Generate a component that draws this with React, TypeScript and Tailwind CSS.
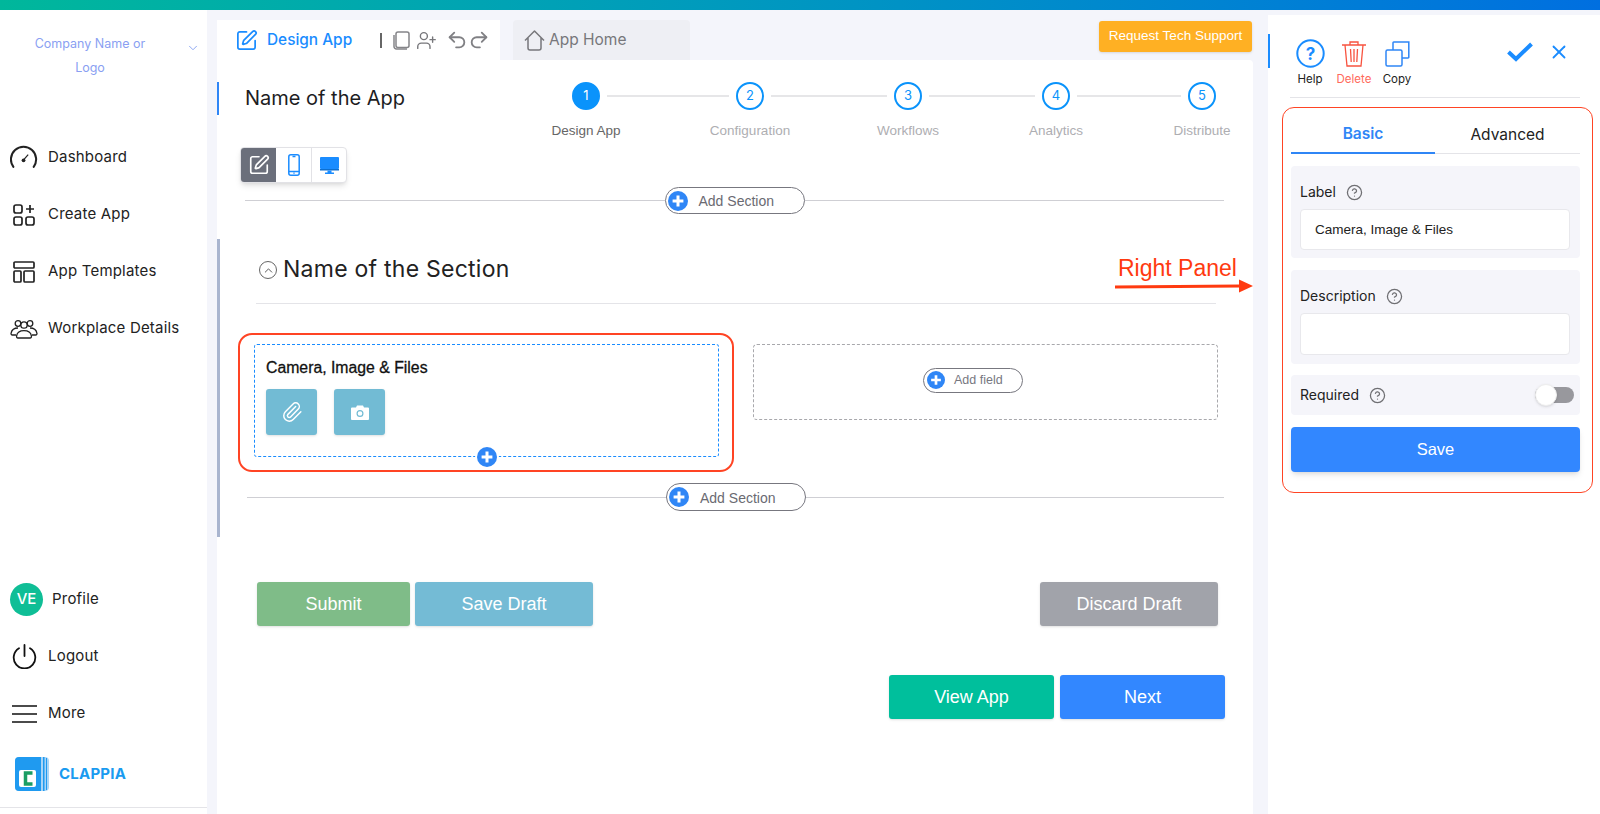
import React from "react";
import { Undo2, Redo2, UserPlus, SquarePen, CircleHelp, X, Paperclip, ChevronDown, ChevronUp } from "lucide-react";

const inter = "font-['Inter',sans-serif]";
const arial = "font-['Liberation_Sans',Arial,sans-serif]";

function PlusDot({ size }: { size: number }) {
  return (
    <svg width={size} height={size} viewBox="0 0 20 20" className="shrink-0">
      <circle cx="10" cy="10" r="10" fill="#2f86f6" />
      <path d="M10 4.6v10.8M4.6 10h10.8" stroke="#fff" strokeWidth="3" />
    </svg>
  );
}

function AddSection({ leftClass }: { leftClass: string }) {
  return (
    <div className="flex items-center">
      <div className={`${leftClass} h-px bg-[#cfcfd4]`} />
      <div className="flex h-full w-[140px] shrink-0 items-center rounded-full border border-[#77777f] pl-[2px]">
        <PlusDot size={20} />
        <span className={`${arial} ml-[11px] mt-[2px] text-[14px] text-[#6a6a72]`}>Add Section</span>
      </div>
      <div className="h-px flex-1 bg-[#cfcfd4]" />
    </div>
  );
}

function NavItem({ icon, label }: { icon: React.ReactNode; label: string }) {
  return (
    <div className="flex h-[57px] items-center pl-[10px]">
      <div className="flex w-[28px] justify-center">{icon}</div>
      <span className={`${inter} ml-[10px] text-[15px] tracking-[0.2px] text-[#222]`}>{label}</span>
    </div>
  );
}

function Step({ n, label, active }: { n: number; label: string; active?: boolean }) {
  return (
    <div className="flex w-[28px] shrink-0 flex-col items-center">
      <div
        className={`${inter} flex h-[28px] w-[28px] items-center justify-center rounded-full border-2 border-[#0a93fb] text-[13px] ${
          active ? "bg-[#0a93fb] text-white" : "bg-white text-[#0a93fb]"
        }`}
      >
        {n}
      </div>
      <span
        className={`${arial} mt-[11px] whitespace-nowrap text-[13.5px] ${active ? "text-[#666]" : "text-[#aeaeb2]"}`}
      >
        {label}
      </span>
    </div>
  );
}

function StepLine({ w }: { w: string }) {
  return <div className={`${w} mx-[7px] mt-[13px] h-[2px] shrink-0 bg-[#e6e6e8]`} />;
}

function Help({ className }: { className?: string }) {
  return <CircleHelp size={17} strokeWidth={1.8} className={`shrink-0 text-[#6f6f73] ${className ?? ""}`} />;
}

function Card({ children, className }: { children: React.ReactNode; className: string }) {
  return <div className={`rounded-[4px] bg-[#f5f5fa] ${className}`}>{children}</div>;
}

export default function App() {
  return (
    <div className="flex h-[814px] w-[1600px] flex-col overflow-hidden bg-[#f4f5fb]">
      <div className="h-[10px] shrink-0 bg-gradient-to-r from-[#00b79b] to-[#006fe0]" />
      <div className="relative flex min-h-0 flex-1">
        {/* Sidebar */}
        <aside className="flex w-[207px] shrink-0 flex-col bg-white">
          <div className="flex h-[119px] shrink-0 items-start pt-[22px]">
            <div className={`${inter} w-[180px] text-center text-[12.5px] leading-[24px] text-[#8a9ff2]`}>
              Company Name or
              <br />
              Logo
            </div>
            <ChevronDown size={14} strokeWidth={1.5} className="ml-[6px] mt-[9px] text-[#7f9cf0]" />
          </div>
          <NavItem
            label="Dashboard"
            icon={
              <svg width="30" height="24" viewBox="0 0 30 24" fill="none" stroke="#222" strokeWidth="2.200" className="-mt-[2px]">
                <path d="M4.100 22.500 A13.500 13.500 0 1 1 25.900 22.500" strokeLinecap="round" transform="translate(-0.5 0)" />
                <path d="M15 14.500 L19.500 9.500" strokeWidth="1.300" />
                <circle cx="14.500" cy="15.500" r="2" fill="#222" stroke="none" />
              </svg>
            }
          />
          <NavItem
            label="Create App"
            icon={
              <svg width="22" height="22" viewBox="0 0 22 22" fill="none" stroke="#222" strokeWidth="1.700">
                <rect x="1" y="1" width="8" height="8" rx="2" />
                <rect x="1" y="13" width="8" height="8" rx="2" />
                <rect x="13" y="13" width="8" height="8" rx="2" />
                <path d="M17 1v8M13 5h8" />
              </svg>
            }
          />
          <NavItem
            label="App Templates"
            icon={
              <svg width="22" height="22" viewBox="0 0 22 22" fill="none" stroke="#222" strokeWidth="1.700">
                <rect x="1" y="1" width="20" height="6" rx="1" />
                <rect x="1" y="10" width="7" height="11" rx="1" />
                <rect x="11" y="10" width="10" height="11" rx="1" />
              </svg>
            }
          />
          <NavItem
            label="Workplace Details"
            icon={
              <svg width="28" height="20" viewBox="0 0 28 20" fill="none" stroke="#222" strokeWidth="1.300">
                <circle cx="8" cy="4.500" r="2.800" />
                <circle cx="20" cy="4.500" r="2.800" />
                <circle cx="14" cy="6" r="3.200" />
                <path d="M8 19h12c1.200 0 1.600-1 1.400-2.200-.5-3-2.800-5.200-7.400-5.200s-6.900 2.200-7.400 5.200C6.400 18 6.800 19 8 19Z" />
                <path d="M6 16H2.400C1.300 16 .8 15.200 1.100 14c.6-2.700 2.700-5 6.900-5M22 16h3.600c1.100 0 1.600-.8 1.300-2-.6-2.700-2.700-5-6.900-5" />
              </svg>
            }
          />
          <div className="mt-auto">
            <div className="flex h-[57px] items-center pl-[10px]">
              <div className={`${inter} flex h-[33px] w-[33px] items-center justify-center rounded-full bg-[#0fbe96] text-[15px] font-medium text-white`}>
                VE
              </div>
              <span className={`${inter} ml-[9px] text-[15px] tracking-[0.2px] text-[#222]`}>Profile</span>
            </div>
            <NavItem
              label="Logout"
              icon={
                <svg width="25" height="25" viewBox="0 0 25 25" fill="none" stroke="#111" strokeWidth="1.800" strokeLinecap="round">
                  <path d="M12.500 1v11" />
                  <path d="M7 4.300a10.800 10.800 0 1 0 11 0" />
                </svg>
              }
            />
            <NavItem
              label="More"
              icon={
                <svg width="25" height="18" viewBox="0 0 25 18" stroke="#111" strokeWidth="1.600">
                  <path d="M0 1h25M0 9h25M0 17h25" />
                </svg>
              }
            />
            <div className="flex h-[65px] items-start pl-[15px] pt-[15px]">
              <svg width="34" height="34" viewBox="0 0 34 34">
                <rect width="34" height="34" rx="4" fill="#a9d5f7" />
                <path d="M4 0h22v34H4a4 4 0 0 1-4-4V4a4 4 0 0 1 4-4Z" fill="#1f9af0" />
                <path d="M28 0h1.500v34H28zM31 1h1v32h-1z" fill="#1f9af0" />
                <rect x="4" y="13" width="17" height="17" rx="2" fill="#fff" />
                <path d="M17.500 16H10.500v11h7" fill="none" stroke="#1a9d63" strokeWidth="3.500" />
              </svg>
              <span className={`${inter} ml-[10px] mt-[7px] text-[15px] font-bold leading-[20px] tracking-[0.2px] text-[#1a9bf0]`}>CLAPPIA</span>
            </div>
            <div className="h-px bg-[#e4e4e8]" />
            <div className="h-[6px]" />
          </div>
        </aside>

        {/* Main column */}
        <main className="ml-[10px] flex w-[1036px] shrink-0 flex-col">
          <div className="mt-[10px] flex h-[40px] shrink-0 items-start">
            <div className="flex h-[40px] w-[283px] shrink-0 items-center bg-white pl-[18px]">
              <SquarePen size={23} strokeWidth={1.800} className="shrink-0 text-[#1a8cff]" />
              <span className={`${inter} ml-[9px] w-[85px] shrink-0 whitespace-nowrap text-[15.4px] font-medium text-[#1a8cff]`}>Design App</span>
              <div className="ml-[28px] h-[15px] w-[2px] shrink-0 bg-[#666]" />
              <svg width="17" height="19" viewBox="0 0 17 19" fill="none" stroke="#858589" strokeWidth="1.500" className="ml-[11px] shrink-0">
                <rect x="3" y="1" width="13" height="15.500" rx="2" />
                <path d="M1 4v11.500A2.500 2.500 0 0 0 3.500 18H14" />
              </svg>
              <UserPlus size={21} strokeWidth={1.600} className="ml-[6px] shrink-0 text-[#77777b]" />
              <Undo2 size={22} strokeWidth={2} className="ml-[9px] shrink-0 text-[#808084]" />
              <Redo2 size={22} strokeWidth={2} className="shrink-0 text-[#808084]" />
            </div>
            <div className="ml-[13px] flex h-[40px] w-[177px] shrink-0 items-center rounded-t-[4px] bg-[#eeeff4] pl-[11px]">
              <svg width="21" height="21" viewBox="0 0 21 21" fill="none" stroke="#77777b" strokeWidth="1.500" strokeLinejoin="round">
                <path d="M1 10.500 10.500 1 20 10.500M4 8v10a2 2 0 0 0 2 2h9a2 2 0 0 0 2-2V8" />
              </svg>
              <span className={`${inter} ml-[4px] text-[15.5px] text-[#77777b]`}>App Home</span>
            </div>
            <button className={`${arial} ml-auto mr-px mt-px flex h-[31px] w-[153px] items-center justify-center rounded-[3px] bg-[#ffb023] text-[13.5px] text-white shadow-sm`}>
              Request Tech Support
            </button>
          </div>

          <div className="relative min-h-0 flex-1 rounded-tr-[4px] bg-white">
            {/* Header */}
            <div className="flex h-[87px] items-start pl-[28px] pt-[22px]">
              <div className={`${inter} w-[327px] shrink-0 pt-[2px] text-[20px] leading-[28px] text-[#1d1d1f]`}>Name of the App</div>
              <div className="flex items-start">
                <Step n={1} label="Design App" active />
                <StepLine w="w-[122px]" />
                <Step n={2} label="Configuration" />
                <StepLine w="w-[116px]" />
                <Step n={3} label="Workflows" />
                <StepLine w="w-[106px]" />
                <Step n={4} label="Analytics" />
                <StepLine w="w-[104px]" />
                <Step n={5} label="Distribute" />
              </div>
            </div>

            {/* View toggle */}
            <div className="ml-[23px] flex h-[36px] w-[107px] overflow-hidden rounded-[4px] border border-[#e2e2e6] bg-white shadow-md">
              <div className="flex w-[35px] items-center justify-center bg-[#6b6f7b]">
                <SquarePen size={22} strokeWidth={1.800} className="text-white" />
              </div>
              <div className="flex w-[36px] items-center justify-center border-r border-[#e2e2e6]">
                <svg width="12" height="22" viewBox="0 0 12 22" fill="none" stroke="#1a8cff" strokeWidth="1.500">
                  <rect x=".8" y=".8" width="10.400" height="20.400" rx="2" />
                  <path d="M4.500 2.500h3M.8 17.500h10.400M5.500 19.300h1" />
                </svg>
              </div>
              <div className="flex flex-1 items-center justify-center">
                <svg width="19" height="19" viewBox="0 0 19 19" fill="#1a8cff">
                  <rect x="0" y="1" width="19" height="12" rx="1" />
                  <rect x="0" y="13" width="19" height="1.500" fill="#0d6fd0" />
                  <path d="M7.500 14.500h4V16.500H14V18H5v-1.500h2.500Z" />
                </svg>
              </div>
            </div>

            {/* Add section 1 */}
            <div className="ml-[28px] mt-[4px] h-[27px] w-[979px] [&>div]:h-full">
              <AddSection leftClass="flex-1" />
            </div>

            {/* Section header */}
            <div className="ml-[39px] flex h-[90px] w-[960px] items-start border-b border-[#e4e4e8] pl-[3px] pt-[39px]">
              <div className="mt-[8px] flex h-[18px] w-[18px] items-center justify-center rounded-full border-[1.5px] border-[#666]">
                <ChevronUp size={13} strokeWidth={1.800} className="text-[#555]" />
              </div>
              <span className={`${inter} ml-[6px] text-[23px] leading-[32px] tracking-[0.25px] text-[#222]`}>Name of the Section</span>
            </div>

            {/* Fields */}
            <div className="ml-[21px] mt-[29px] flex items-start">
              <div className="h-[139px] w-[496px] shrink-0 rounded-[14px] border-2 border-[#ff4424] pl-[14px] pt-[9px]">
                <div className="relative h-[113px] w-[465px] rounded-[3px] border border-dashed border-[#1a8cff] pl-[11px] pt-[13px]">
                  <div className={`${arial} text-[15.8px] leading-[20px] text-[#111] [-webkit-text-stroke:0.3px_#111]`}>Camera, Image &amp; Files</div>
                  <div className="mt-[11px] flex gap-[17px]">
                    <div className="flex h-[46px] w-[51px] items-center justify-center rounded-[3px] bg-[#72bbd4] shadow-sm">
                      <Paperclip size={22} strokeWidth={1.600} className="text-white" />
                    </div>
                    <div className="flex h-[46px] w-[51px] items-center justify-center rounded-[3px] bg-[#72bbd4] shadow-sm">
                      <svg width="18" height="15" viewBox="0 0 18 15">
                        <path fillRule="evenodd" fill="#fff" d="M1 2.500h4L6 .5h6l1 2h4a1 1 0 0 1 1 1V14a1 1 0 0 1-1 1H1a1 1 0 0 1-1-1V3.500a1 1 0 0 1 1-1ZM9 5a3.500 3.500 0 1 0 0 7 3.500 3.500 0 0 0 0-7Zm0 1.200a2.300 2.300 0 1 1 0 4.600 2.300 2.300 0 0 1 0-4.600Z" />
                      </svg>
                    </div>
                  </div>
                  <div className="absolute bottom-[-11px] left-[220px] rounded-full bg-white px-[2px]">
                    <PlusDot size={20} />
                  </div>
                </div>
              </div>
              <div className="ml-[19px] mt-[11px] flex h-[76px] w-[465px] shrink-0 items-center justify-center rounded-[4px] border border-dashed border-[#a8a8ac] pb-[4px] pr-[25px]">
                <div className="flex h-[25px] w-[100px] items-center rounded-full border border-[#77777f] pl-[3px]">
                  <PlusDot size={18} />
                  <span className={`${arial} ml-[9px] text-[12.5px] text-[#77777f]`}>Add field</span>
                </div>
              </div>
            </div>

            {/* Add section 2 */}
            <div className="ml-[30px] mt-[11px] h-[28px] w-[977px] [&>div]:h-full">
              <AddSection leftClass="w-[419px]" />
            </div>

            {/* Form buttons */}
            <div className={`${arial} ml-[40px] mr-[35px] mt-[71px] flex h-[44px] text-[18px] text-white`}>
              <div className="flex w-[153px] items-center justify-center rounded-[3px] bg-[#7fbc88] shadow-sm">Submit</div>
              <div className="ml-[5px] flex w-[178px] items-center justify-center rounded-[3px] bg-[#74bbd5] shadow-sm">Save Draft</div>
              <div className="ml-auto flex w-[178px] items-center justify-center rounded-[3px] bg-[#a1a3aa] shadow-sm">Discard Draft</div>
            </div>
            <div className={`${arial} mr-[28px] mt-[49px] flex h-[44px] justify-end gap-[6px] text-[18px] text-white`}>
              <div className="flex w-[165px] items-center justify-center rounded-[3px] bg-[#00bf9c] shadow-sm">View App</div>
              <div className="flex w-[165px] items-center justify-center rounded-[3px] bg-[#3287ff] shadow-sm">Next</div>
            </div>

            {/* Annotation + markers */}
            <div className="absolute left-0 top-[22px] h-[33px] w-[2px] bg-[#2f86f6]" />
            <div className="absolute left-0 top-[179px] h-[298px] w-[3px] bg-[#a9b5cf]" />
            <div className={`${arial} absolute left-[901px] top-[194px] text-[23px] leading-[28px] text-[#ff3a10]`}>Right Panel</div>
            <svg className="absolute left-[898px] top-[219px]" width="138" height="14" viewBox="0 0 138 14">
              <path d="M0 8 L125 7" stroke="#ff3a10" strokeWidth="3" />
              <path d="M124 0.500 L138 7 L124 13.500 Z" fill="#ff3a10" />
            </svg>
          </div>
        </main>

        {/* Right panel */}
        <section className="relative ml-[15px] mt-[5px] flex min-w-0 flex-1 flex-col bg-white pl-[18px] pr-[20px]">
          <div className="absolute left-0 top-[19px] h-[34px] w-[2px] bg-[#1a8cff]" />
          <div className="ml-[4px] flex h-[83px] shrink-0 items-start border-b border-[#e4e4e8] pt-[24px]">
            <div className={`${inter} -ml-[2px] flex w-[44px] flex-col items-center text-[11.5px] text-[#222]`}>
              <div className="flex h-[29px] items-center">
                <svg width="29" height="29" viewBox="0 0 29 29">
                  <circle cx="14.500" cy="14.500" r="13.200" fill="none" stroke="#1a8cff" strokeWidth="2" />
                  <text x="14.500" y="20.500" textAnchor="middle" fontSize="17" fontWeight="700" fill="#1a8cff">?</text>
                </svg>
              </div>
              <span className="mt-[5px] leading-[13px]">Help</span>
            </div>
            <div className={`${inter} flex w-[44px] flex-col items-center text-[11.5px] text-[#ff6a5c]`}>
              <div className="flex h-[29px] items-center">
                <svg width="24" height="26" viewBox="0 0 24 26" fill="none" stroke="#f8533f" strokeWidth="1.300">
                  <path d="M0 4h24M8 4V1h8v3M3 4l2 21h14l2-21M8.500 8l.7 13M12 8v13M15.500 8l-.7 13" />
                </svg>
              </div>
              <span className="mt-[5px] leading-[13px]">Delete</span>
            </div>
            <div className={`${inter} -ml-px flex w-[44px] flex-col items-center text-[11.5px] text-[#222]`}>
              <div className="flex h-[29px] items-center">
                <svg width="25" height="26" viewBox="0 0 25 26" fill="none" stroke="#2f86f6" strokeWidth="1.500">
                  <rect x="1" y="9" width="16" height="16" rx="1.500" />
                  <path d="M8 9V1.800A.8.800 0 0 1 8.800 1h15v15.200a.8.800 0 0 1-.8.800h-6" />
                </svg>
              </div>
              <span className="mt-[5px] leading-[13px]">Copy</span>
            </div>
            <svg width="26" height="20" viewBox="0 0 26 20" fill="none" stroke="#1a8cff" strokeWidth="4" className="ml-[88px] mt-[3px]">
              <path d="M1.500 10 9 17 24.500 2" />
            </svg>
            <X size={22} strokeWidth={2} className="ml-[15px] mt-[2px] text-[#1a8cff]" />
          </div>

          <div className="relative -ml-[4px] -mr-[13px] mt-[9px] flex h-[386px] shrink-0 flex-col rounded-[12px] border-[1.5px] border-[#ff4424] pl-[8px] pr-[12px]">
            <div className={`${inter} flex h-[46px] shrink-0 text-[15.5px]`}>
              <div className="flex w-[144px] items-center justify-center border-b-2 border-[#2f86f6] pt-[8px] font-semibold text-[#2f86f6]">Basic</div>
              <div className="flex flex-1 items-center justify-center border-b border-[#e4e4e8] pt-[8px] text-[#222]">Advanced</div>
            </div>
            <Card className="mt-[12px] h-[92px] shrink-0 pl-[9px] pr-[10px] pt-[16px]">
              <div className={`${inter} flex h-[18px] items-center text-[14px] text-[#222]`}>
                Label
                <Help className="ml-[10px] mt-[2px]" />
              </div>
              <div className={`${arial} mt-[9px] flex h-[41px] items-center rounded-[4px] border border-[#e8e8ec] bg-white pl-[14px] pt-px text-[13.5px] text-[#222]`}>
                Camera, Image &amp; Files
              </div>
            </Card>
            <Card className="mt-[12px] h-[94px] shrink-0 pl-[9px] pr-[10px] pt-[16px]">
              <div className={`${inter} flex h-[18px] items-center text-[14px] text-[#222]`}>
                Description
                <Help className="ml-[10px] mt-[2px]" />
              </div>
              <div className="mt-[9px] h-[42px] rounded-[4px] border border-[#e8e8ec] bg-white" />
            </Card>
            <Card className="mt-[11px] flex h-[40px] shrink-0 items-center pl-[9px] pr-[6px]">
              <div className={`${inter} -mt-[2px] flex items-center text-[14px] text-[#222]`}>
                Required
                <Help className="ml-[10px] mt-[3px]" />
              </div>
              <div className="ml-auto flex h-[16px] w-[39px] items-center rounded-full bg-[#98989d]">
                <div className="h-[22px] w-[22px] rounded-full border border-[#eee] bg-white shadow" />
              </div>
            </Card>
            <button className={`${arial} mt-[12px] h-[45px] shrink-0 rounded-[4px] bg-[#3287ff] text-[16.5px] text-white shadow-md`}>Save</button>
          </div>
        </section>
      </div>
    </div>
  );
}
